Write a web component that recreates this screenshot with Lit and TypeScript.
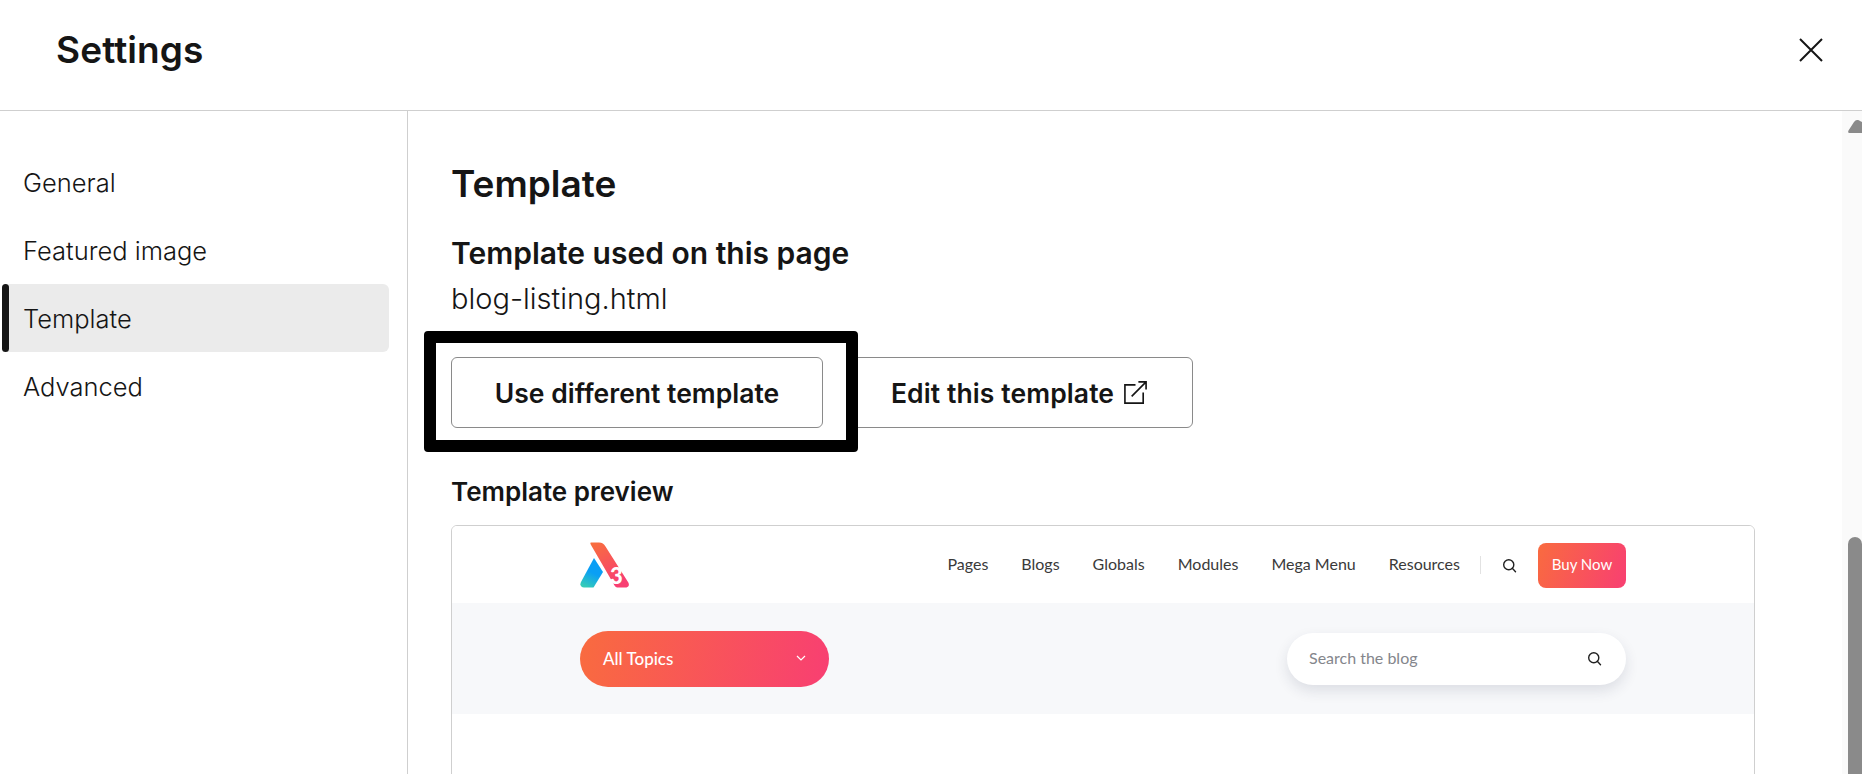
import { LitElement, html, css } from "lit";
import { customElement } from "lit/decorators.js";

const searchIcon = (size: number) => html`<svg class="search-icon" width=${size} height=${size} viewBox="0 0 16 16" fill="none" stroke="#222" stroke-width="1.5"><circle cx="7.2" cy="7.2" r="5.4"></circle><path d="M11 11l3.4 3.6" stroke-linecap="round"></path></svg>`;

@customElement("app-root")
export class AppRoot extends LitElement {
  static styles = css`
    :host { display: block; width: 1862px; height: 774px; overflow: hidden; background: #fff; color: #151515; font-family: Inter, "Liberation Sans", sans-serif; }
    * { box-sizing: border-box; }
    .header { height: 111px; border-bottom: 1px solid #cfcfcf; display: flex; align-items: center; justify-content: space-between; padding: 0 39px 10px 56px; }
    .header h1 { margin: 0; font-size: 37px; line-height: 44px; font-weight: 600; letter-spacing: 0.1px; }
    .close { display: block; }
    .body { display: flex; height: 663px; }
    .side { width: 408px; flex: none; border-right: 1px solid #cfcfcf; padding: 37px 18px 0 2px; }
    .item { display: flex; position: relative; height: 68px; align-items: center; padding: 1px 0 0 21px; font-size: 25.500px; line-height: 34px; font-weight: 300; border-radius: 6px; }
    .item.active { background: #ebebeb; }
    .item.active::before { content: ""; position: absolute; left: 0; top: 0; bottom: 0; width: 7px; border-radius: 4px; background: #151515; }
    .main { position: relative; flex: 1; min-width: 0; overflow: hidden; padding: 51px 87px 0 43px; }
    h2 { margin: 0; font-size: 37px; line-height: 44px; font-weight: 600; }
    h3 { margin: 29px 0 0; font-size: 30px; line-height: 36px; font-weight: 600; }
    .file { margin-top: 9px; font-size: 29px; line-height: 37px; font-weight: 300; }
    .buttons { display: flex; gap: 23px; margin-top: 40px; }
    .btn { height: 71px; border: 1px solid #8a8a8a; border-radius: 6px; background: #fff; display: flex; align-items: center; justify-content: center; gap: 9px; font-size: 26.500px; font-weight: 600; }
    .btn.one { width: 372px; }
    .btn.two { width: 347px; letter-spacing: 0.1px; }
    .mark { position: absolute; left: 16px; top: 220px; width: 434px; height: 121px; border: 12px solid #000; border-radius: 4px; }
    h4 { margin: 47px 0 0; font-size: 26px; line-height: 33px; font-weight: 600; }
    .card { margin-top: 17px; height: 400px; border: 1px solid #cfcfcf; border-radius: 6px; overflow: hidden; font-family: Lato, "Liberation Sans", sans-serif; }
    .wrap { width: 1046px; margin: 0 auto; display: flex; align-items: center; }
    .nav { height: 77px; background: #fff; }
    .nav .wrap { height: 77px; padding-top: 1px; }
    .links { margin-left: auto; display: flex; align-items: center; gap: 33px; font-size: 16px; color: #3a3a3a; padding-bottom: 3px; }
    .divider { width: 1px; height: 18px; background: #e2e2e2; margin: 0 21px 0 20px; }
    .search-icon { display: block; flex: none; }
    .buy { margin-left: 21px; width: 88px; height: 45px; border-radius: 8px; background: linear-gradient(110deg, #f96b3f, #f83f72); color: #fff; font-size: 15px; display: flex; align-items: center; justify-content: center; padding-bottom: 2px; }
    .band { height: 111px; background: #f7f8fa; }
    .band .wrap { height: 111px; justify-content: space-between; }
    .pill { width: 249px; height: 56px; border-radius: 28px; background: linear-gradient(100deg, #f96b3f, #f83f72); color: #fff; font-size: 17px; font-weight: 500; display: flex; align-items: center; justify-content: space-between; padding: 0 23px; }
    .searchbox { width: 339px; height: 52px; border-radius: 26px; background: #fff; box-shadow: 0 6px 14px rgba(30,40,70,.12); display: flex; align-items: center; justify-content: space-between; padding: 0 24px 0 22px; font-size: 16px; color: #84868c; }
    .searchbox span { padding-bottom: 2px; }
    .bar { width: 20px; flex: none; background: #fafafa; display: flex; flex-direction: column; align-items: flex-end; padding-top: 9px; }
    .thumb { margin-top: 404px; width: 14px; flex: 1; background: #8a8a8a; border-radius: 7px 7px 0 0; }
    .arrow { display: block; }
  `;

  render() {
    const items = ["General", "Featured image", "Template", "Advanced"];
    return html`
      <div class="header">
        <h1>Settings</h1>
        <svg class="close" width="24" height="24" viewBox="0 0 24 24" fill="none" stroke="#151515" stroke-width="2"><path d="M1 1l22 22M23 1L1 23"></path></svg>
      </div>
      <div class="body">
        <div class="side">
          ${items.map((t) => html`<div class="item ${t === "Template" ? "active" : ""}">${t}</div>`)}
        </div>
        <div class="main">
          <h2>Template</h2>
          <h3>Template used on this page</h3>
          <div class="file">blog-listing.html</div>
          <div class="buttons">
            <div class="btn one">Use different template</div>
            <div class="btn two">Edit this template
              <svg width="25" height="25" viewBox="0 0 26 26" fill="none" stroke="#151515" stroke-width="1.7"><path d="M13 5H2v19h19V13"></path><path d="M9 17L24 2M16 2h8v8"></path></svg>
            </div>
          </div>
          <div class="mark"></div>
          <h4>Template preview</h4>
          <div class="card">
            <div class="nav"><div class="wrap">
              <svg width="50" height="46" viewBox="0 0 50 46">
                <defs>
                  <linearGradient id="lr" x1="0" y1="0" x2="0.5" y2="1"><stop offset="0" stop-color="#f8703c"></stop><stop offset="1" stop-color="#f83f72"></stop></linearGradient>
                  <linearGradient id="lb" x1="0.6" y1="0.2" x2="0.3" y2="1"><stop offset="0.35" stop-color="#0a9ff5"></stop><stop offset="1" stop-color="#35cbb8"></stop></linearGradient>
                </defs>
                <path d="M11 .5H19C22 .5 24 2 25.500 4.500L48 40C50 43 48.500 45.500 45.500 45.500H38C36.500 45.500 35.500 45 34.500 43.500L11 3C10.300 1.700 10 .5 11 .5Z" fill="url(#lr)"></path>
                <path d="M14 16L23 30L13.500 45.500H4C1 45.500 -.5 43 1 40Z" fill="url(#lb)"></path>
                <text x="30" y="42" font-family="Lato, sans-serif" font-size="22" font-weight="900" fill="#fff">3</text>
              </svg>
              <div class="links">
                <span>Pages</span><span>Blogs</span><span>Globals</span><span>Modules</span><span>Mega Menu</span><span>Resources</span>
              </div>
              <div class="divider"></div>
              ${searchIcon(15)}
              <div class="buy">Buy Now</div>
            </div></div>
            <div class="band"><div class="wrap">
              <div class="pill">All Topics
                <svg width="10" height="7" viewBox="0 0 10 7" fill="none" stroke="#fff" stroke-width="1.2"><path d="M1 1l4 4 4-4"></path></svg>
              </div>
              <div class="searchbox"><span>Search the blog</span> ${searchIcon(15)}</div>
            </div></div>
          </div>
        </div>
        <div class="bar">
          <svg class="arrow" width="14" height="13" viewBox="0 0 14 13"><path d="M1 13C0 13 0 11.500 .5 10.500L6 2C8 -.5 10 -.5 12 1L14 2V13Z" fill="#8a8a8a"></path></svg>
          <div class="thumb"></div>
        </div>
      </div>
    `;
  }
}
